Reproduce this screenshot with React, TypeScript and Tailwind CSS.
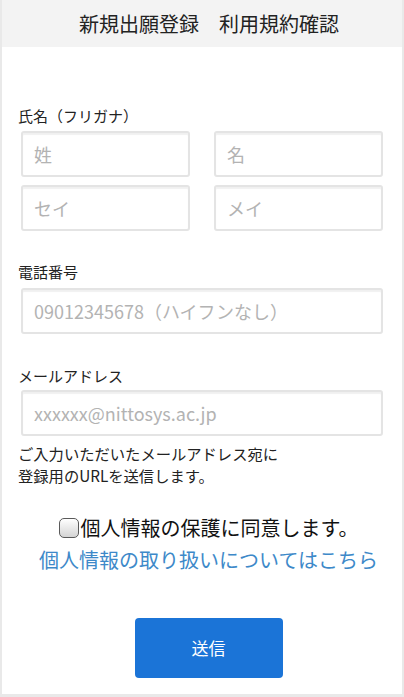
import { useState } from "react";

const fieldClass =
  "block w-full h-[46px] rounded-[3px] border-2 border-[#e4e4e4] bg-white px-[11px] text-[18px] text-[#333] shadow-[inset_0_2px_1px_rgba(0,0,0,0.06)] outline-none placeholder:text-[#b3b3b3]";

function Label({ children, className = "" }: { children: React.ReactNode; className?: string }) {
  return <p className={`text-[15px] leading-[20px] text-[#222] ${className}`}>{children}</p>;
}

export default function App() {
  const [agree, setAgree] = useState(false);

  return (
    <div
      className="h-[697px] w-full overflow-hidden border-x-2 border-b-[3px] border-[#e9e9e9] bg-white"
      style={{ fontFamily: '"Noto Sans CJK JP", "Noto Sans", sans-serif' }}
    >
      {/* header */}
      <header className="flex h-[47px] items-center justify-center bg-[#f3f3f3] pl-[14px]">
        <h1 className="text-[20px] leading-none text-[#222]">新規出願登録　利用規約確認</h1>
      </header>

      <form className="pl-[16px] pr-[19px]" onSubmit={(e) => e.preventDefault()}>
        {/* name */}
        <Label className="mt-[59px]">氏名（フリガナ）</Label>
        <div className="mt-[5px] ml-[3px] grid grid-cols-2 gap-x-[24px] gap-y-[8px]">
          <input className={fieldClass} placeholder="姓" />
          <input className={fieldClass} placeholder="名" />
          <input className={fieldClass} placeholder="セイ" />
          <input className={fieldClass} placeholder="メイ" />
        </div>

        {/* phone */}
        <Label className="mt-[31px]">電話番号</Label>
        <div className="mt-[6px] ml-[3px]">
          <input className={fieldClass} placeholder="09012345678（ハイフンなし）" />
        </div>

        {/* mail */}
        <Label className="mt-[32px]">メールアドレス</Label>
        <div className="mt-[4px] ml-[3px]">
          <input className={fieldClass} placeholder="xxxxxx@nittosys.ac.jp" />
        </div>
        <p className="mt-[6px] text-[15.3px] leading-[22px] text-[#222]">
          ご入力いただいたメールアドレス宛に
          <br />
          登録用のURLを送信します。
        </p>

        {/* agreement */}
        <div className="pl-[16px]">
          <label className="mt-[30px] flex items-center justify-center">
            <input
              type="checkbox"
              checked={agree}
              onChange={(e) => setAgree(e.target.checked)}
              className="h-[20px] w-[20px] appearance-none rounded-[5px] border border-[#5a5a5a] bg-gradient-to-b from-white to-[#d4d4d4]"
            />
            <span className="ml-[2px] text-[20px] leading-[24px] text-[#111]">個人情報の保護に同意します。</span>
          </label>
          <p className="mt-[8px] text-center text-[20px] leading-[24px] text-[#3d89c9]">
            個人情報の取り扱いについてはこちら
          </p>

          <div className="mt-[46px] flex justify-center">
            <button
              type="submit"
              className="h-[60px] w-[148px] rounded-[4px] bg-[#1b74d7] text-[17px] text-white"
            >
              送信
            </button>
          </div>
        </div>
      </form>
    </div>
  );
}
